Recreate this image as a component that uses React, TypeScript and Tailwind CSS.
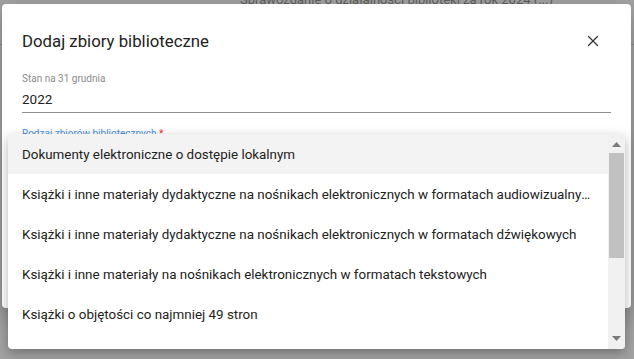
import { X } from 'lucide-react';

const OPTIONS = [
  'Dokumenty elektroniczne o dostępie lokalnym',
  'Książki i inne materiały dydaktyczne na nośnikach elektronicznych w formatach audiowizualnych',
  'Książki i inne materiały dydaktyczne na nośnikach elektronicznych w formatach dźwiękowych',
  'Książki i inne materiały na nośnikach elektronicznych w formatach tekstowych',
  'Książki o objętości co najmniej 49 stron',
];

function ScrollArrow({ direction }: { direction: 'up' | 'down' }) {
  return (
    <svg width="9" height="5" viewBox="0 0 9 5" className="text-[#7a7a7a]">
      {direction === 'up' ? (
        <path d="M0 5 L4.5 0 L9 5 Z" fill="currentColor" />
      ) : (
        <path d="M0 0 L4.5 5 L9 0 Z" fill="currentColor" />
      )}
    </svg>
  );
}

export default function App() {
  return (
    <div className="relative h-[359px] w-full overflow-hidden bg-[#a2a2a2] font-['Roboto',sans-serif]">
      {/* page behind the backdrop */}
      <div className="absolute left-[240px] top-[-10px] whitespace-nowrap text-[13px] text-[#5f5f5f]">
        Sprawozdanie o działalności biblioteki za rok 2024 (...)
      </div>
      <div className="absolute left-0 right-0 top-[44px] h-px bg-[#8a8a8a]" />

      {/* dialog */}
      <div className="absolute left-[2px] top-[4px] h-[304px] w-[629px] rounded-[4px] bg-white shadow-[0_8px_24px_rgba(0,0,0,0.25)]">
        <div className="flex items-center justify-between pl-5 pr-[29px] pt-[26px]">
          <h2 className="text-[16.8px] leading-[22px] text-[#222]">Dodaj zbiory biblioteczne</h2>
          <X size={18} strokeWidth={1.6} className="text-[#333]" />
        </div>

        <div className="pl-5 pr-[20px] pt-[21px]">
          <div className="text-[10px] leading-[12px] text-[#8a8a8a]">Stan na 31 grudnia</div>
          <div className="mt-[5px] border-b border-[#8f8f8f] pb-[4px] text-[13.5px] leading-[18px] text-[#222]">
            2022
          </div>
          <div className="mt-[15px] text-[10px] leading-[12px] text-[#4a90d9]">
            Rodzaj zbiorów bibliotecznych <span className="text-[#e53935]">*</span>
          </div>
        </div>
      </div>

      {/* dropdown list */}
      <div className="absolute left-[8px] top-[134px] flex h-[215px] w-[617px] overflow-hidden rounded-[4px] bg-white shadow-[0_4px_12px_rgba(0,0,0,0.3)]">
        <ul className="min-w-0 flex-1">
          {OPTIONS.map((option, index) => (
            <li
              key={option}
              className={[
                'flex h-[40px] items-center pl-[14px] pr-[13px] pt-[3px] text-[13.4px] text-[#222]',
                index === 0 ? 'bg-[#f3f3f3]' : '',
              ].join(' ')}
            >
              <span className="truncate">{option}</span>
            </li>
          ))}
        </ul>
        <div className="flex w-[17px] flex-col items-center bg-[#f1f1f1]">
          <div className="flex h-[19px] items-center justify-center pt-[2px]">
            <ScrollArrow direction="up" />
          </div>
          <div className="h-[105px] w-[15px] bg-[#c1c1c1]" />
          <div className="flex-1" />
          <div className="flex h-[19px] items-center justify-center pb-[3px]">
            <ScrollArrow direction="down" />
          </div>
        </div>
      </div>
    </div>
  );
}
